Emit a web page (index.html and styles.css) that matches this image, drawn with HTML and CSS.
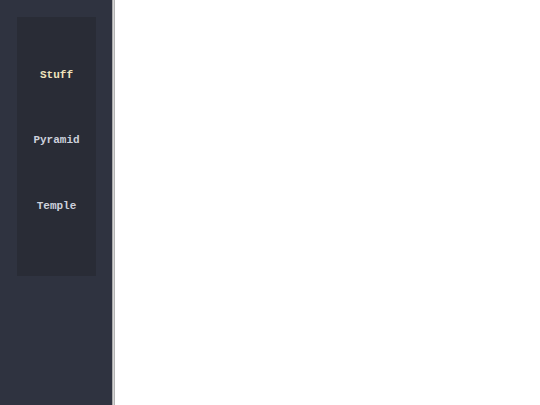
FILE: index.html
```html
<!DOCTYPE html>
<html>
<head>
<meta charset="utf-8">
<link rel="stylesheet" href="styles.css">
</head>
<body>
<div class="layout">
  <aside class="sidebar">
    <nav class="panel">
      <div class="item active">Stuff</div>
      <div class="item">Pyramid</div>
      <div class="item">Temple</div>
    </nav>
  </aside>
  <main class="content"></main>
</div>
</body>
</html>
```
FILE: styles.css
```css
html, body {
  margin: 0;
  padding: 0;
  height: 100%;
  background: #ffffff;
}
.layout {
  display: flex;
  height: 100%;
}
.sidebar {
  width: 113px;
  flex: none;
  background: #2f3340;
  border-right: 1px solid #a8a8a8;
  box-shadow: 1px 0 0 #d6d6d6, 2px 0 0 #b4b4b4;
  padding: 17px 16px 0 17px;
  box-sizing: border-box;
}
.panel {
  background: #292c36;
  height: 259px;
  box-sizing: border-box;
  padding-top: 25px;
  display: flex;
  flex-direction: column;
}
.item {
  height: 65.5px;
  flex: none;
  display: flex;
  align-items: center;
  justify-content: center;
  font-family: "Liberation Mono", monospace;
  font-weight: bold;
  font-size: 11px;
  color: #cdd1dc;
}
.item.active {
  color: #efe3bd;
}
.content {
  flex: 1;
}
```
